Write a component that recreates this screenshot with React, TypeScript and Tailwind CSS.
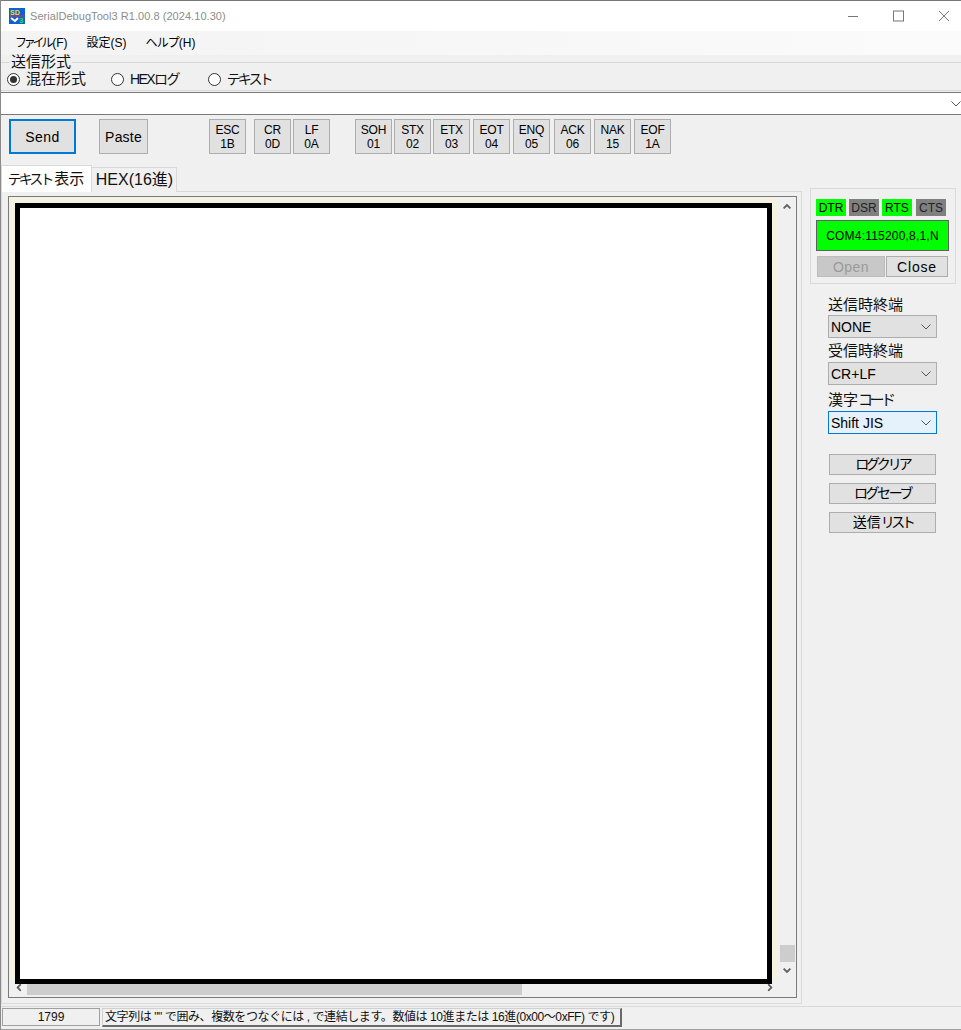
import React from 'react'

const font = { fontFamily: '"Liberation Sans", "Noto Sans CJK JP", sans-serif' }

const keys = [
  { top: 'ESC', bottom: '1B', ml: 'ml-0' },
  { top: 'CR', bottom: '0D', ml: 'ml-[8px]' },
  { top: 'LF', bottom: '0A', ml: 'ml-[2px]' },
  { top: 'SOH', bottom: '01', ml: 'ml-[25px]' },
  { top: 'STX', bottom: '02', ml: 'ml-[2px]' },
  { top: 'ETX', bottom: '03', ml: 'ml-[2px]' },
  { top: 'EOT', bottom: '04', ml: 'ml-[3px]' },
  { top: 'ENQ', bottom: '05', ml: 'ml-[3px]' },
  { top: 'ACK', bottom: '06', ml: 'ml-[4px]' },
  { top: 'NAK', bottom: '15', ml: 'ml-[3px]' },
  { top: 'EOF', bottom: '1A', ml: 'ml-[3px]' },
]

const Chevron = ({ className = '' }: { className?: string }) => (
  <svg width="10" height="6" viewBox="0 0 10 6" className={className} fill="none" stroke="currentColor" strokeWidth="1">
    <path d="M0.5 0.5 L5 5 L9.5 0.5" />
  </svg>
)

// scrollbar arrows are heavier than the combo ones
const ScrollArrow = ({ className = '' }: { className?: string }) => (
  <svg width="8" height="5" viewBox="0 0 8 5" className={`shrink-0 ${className}`} fill="none" stroke="currentColor" strokeWidth="1.8">
    <path d="M0.6 0.6 L4 4 L7.4 0.6" />
  </svg>
)

const Radio = ({ checked, children, className }: { checked?: boolean; children: React.ReactNode; className: string }) => (
  <div className={`flex items-center ${className}`}>
    <span className="w-[13px] h-[13px] rounded-full border border-[#333] bg-white flex items-center justify-center">
      {checked && <span className="w-[7px] h-[7px] rounded-full bg-[#333]" />}
    </span>
    <span className="ml-[6px] leading-[16px] text-[#111]">{children}</span>
  </div>
)

const Select = ({ value, focused, className }: { value: string; focused?: boolean; className: string }) => (
  <div
    className={`w-[109px] h-[23px] flex items-center justify-between pl-[2px] pr-[5px] border text-[14px] text-black ${
      focused ? 'bg-[#e5f1fb] border-[#0078d7]' : 'bg-[#e1e1e1] border-[#adadad]'
    } ${className}`}
  >
    <span className="pt-[1px]">{value}</span>
    <Chevron className="text-[#555]" />
  </div>
)

const SideButton = ({ children, className }: { children: React.ReactNode; className: string }) => (
  <div className={`w-[107px] h-[21px] ml-[1px] bg-[#e1e1e1] border border-[#adadad] flex items-center justify-center text-[14px] text-black ${className}`}>
    {children}
  </div>
)

const Led = ({ label, on, className }: { label: string; on?: boolean; className: string }) => (
  <div className={`w-[30px] h-[17px] flex items-center justify-center text-[12px] ${on ? 'bg-[#00ff00] text-black' : 'bg-[#808080] text-[#222]'} ${className}`}>
    {label}
  </div>
)

export default function App() {
  return (
    <div style={font} className="w-[961px] h-[1030px] bg-[#f0f0f0] flex flex-col overflow-hidden border-l border-[#8a8a8a]">
      {/* Title bar */}
      <div className="h-[31px] shrink-0 bg-white border-t border-[#777] flex items-center">
        <svg width="16" height="16" viewBox="0 0 16 16" className="ml-[8px]">
          <rect width="16" height="16" fill="#1060d0" />
          <text x="1" y="7" fontSize="7" fontWeight="700" fill="#f0e020">SD</text>
          <path d="M1 8 H15" stroke="#e03030" strokeWidth="1" />
          <path d="M2 10 L6 13 L9 10" stroke="#fff" strokeWidth="2" fill="none" />
          <text x="10" y="15" fontSize="8" fontWeight="700" fill="#30e030">3</text>
        </svg>
        <span className="ml-[5px] text-[11px] text-[#8c8c8c] tracking-[0.05px]">SerialDebugTool3 R1.00.8 (2024.10.30)</span>
        <div className="ml-auto flex items-center text-[#777]">
          <svg width="10" height="12" viewBox="0 0 10 12" className="mr-[35px]"><path d="M0 6.5 H10" stroke="currentColor" /></svg>
          <svg width="11" height="12" viewBox="0 0 11 12" className="mr-[34px]"><rect x="0.5" y="1" width="10" height="10" fill="none" stroke="currentColor" /></svg>
          <svg width="12" height="12" viewBox="0 0 12 12" className="mr-[11px]"><path d="M1 1 L11 11 M11 1 L1 11" stroke="currentColor" /></svg>
        </div>
      </div>

      {/* Menu */}
      <div className="h-[24px] shrink-0 bg-gradient-to-r from-[#f3f3f3] to-[#fbfbfb] flex items-center text-[12px] text-black">
        <span className="ml-[14px]"><span className="tracking-[-3.2px]">ファイル</span><span className="ml-[2px]">(F)</span></span>
        <span className="ml-[19px]">設定(S)</span>
        <span className="ml-[19px]"><span className="tracking-[-0.9px]">ヘルプ</span>(H)</span>
      </div>

      {/* 送信形式 group */}
      <div className="relative mt-[7px] h-[29px] shrink-0 border-t border-b border-[#d9d9d9] flex items-center pt-[5px]">
        <span className="absolute left-[9px] -top-[9px] px-[1px] bg-[#f0f0f0] text-[15px] leading-[16px] text-[#111]">送信形式</span>
        <Radio checked className="ml-[6px] text-[15px]">混在形式</Radio>
        <Radio className="ml-[25px] text-[14px]"><span className="tracking-[-1.6px]">HEXログ</span></Radio>
        <Radio className="ml-[29px] text-[14px]"><span className="tracking-[-3px]">テキスト</span></Radio>
      </div>

      {/* Send text box */}
      <div className="mt-[1px] h-[23px] shrink-0 bg-white border-t border-b border-[#7a7a7a] flex items-center justify-end">
        <Chevron className="text-[#555]" />
      </div>

      {/* Buttons */}
      <div className="mt-[4px] h-[36px] shrink-0 flex items-start text-black">
        <div className="ml-[8px] w-[67px] h-[35px] pt-[1px] bg-[#e1e1e1] border-2 border-[#0078d7] flex items-center justify-center text-[14px] tracking-[0.5px]">Send</div>
        <div className="ml-[23px] w-[49px] h-[35px] pt-[1px] bg-[#e1e1e1] border border-[#adadad] flex items-center justify-center text-[14px] tracking-[0.2px]">Paste</div>
        <div className="ml-[61px] flex">
          {keys.map(k => (
            <div key={k.top} className={`w-[37px] ${k.ml} h-[35px] pt-[1px] bg-[#e1e1e1] border border-[#adadad] flex flex-col items-center justify-center text-[12px] leading-[14px] tracking-[-0.2px]`}>
              <span>{k.top}</span>
              <span>{k.bottom}</span>
            </div>
          ))}
        </div>
      </div>

      {/* Main area */}
      <div className="flex flex-1 min-h-0">
        <div className="w-[805px] shrink-0 flex flex-col">
          <div className="mt-[10px] -mb-[1px] h-[27px] flex items-end shrink-0 relative z-10">
            <div className="w-[91px] h-[27px] bg-white border-t border-l border-r border-[#d9d9d9] flex items-center justify-center text-[#111] pr-[1px]">
              <span className="text-[14px] tracking-[-3px]">テキスト</span>
              <span className="text-[15px] ml-[3px]">表示</span>
            </div>
            <div className="w-[85px] h-[25px] bg-[#f0f0f0] border-t border-r border-[#d9d9d9] flex items-center justify-center text-[16px] text-[#111] pl-[1px]">HEX(16進)</div>
          </div>
          {/* Tab body */}
          <div className="w-[801px] h-[813px] border border-[#d9d9d9] bg-[#f0f0f0] pt-[4px] pl-[6px]">
            <div className="w-[789px] h-[802px] border border-[#7a7a7a] bg-[#f0f0f0] flex flex-col">
              <div className="flex h-[782px] shrink-0">
                <div className="w-[769px] h-[782px] pl-[1px] pt-[1px]">
                  <div className="w-[768px] h-[781px] bg-[#f5f3e0] pl-[5px] pt-[5px] relative z-10">
                    <div className="w-[757px] h-[781px] border-[5px] border-black bg-white" />
                  </div>
                </div>
                <div className="w-[18px] flex flex-col items-center text-[#606060] pt-[7px]">
                  <ScrollArrow className="rotate-180" />
                  <div className="mt-[736px] w-[15px] h-[17px] bg-[#cdcdcd]" />
                  <ScrollArrow className="mt-[6px]" />
                </div>
              </div>
              <div className="h-[18px] flex items-start text-[#606060]">
                <ScrollArrow className="rotate-90 ml-[6px] mt-[6px]" />
                <div className="ml-[4px] mt-[5px] w-[495px] h-[11px] bg-[#cdcdcd]" />
                <ScrollArrow className="-rotate-90 ml-[244px] mt-[6px] relative z-20" />
              </div>
            </div>
          </div>
        </div>

        {/* Right panel */}
        <div className="flex-1 flex flex-col">
          <div className="ml-[4px] mt-[33px] w-[146px] h-[96px] border border-[#d9d9d9] p-[5px] pt-[10px]">
            <div className="flex">
              <Led on label="DTR" className="" />
              <Led label="DSR" className="ml-[3px]" />
              <Led on label="RTS" className="ml-[3px]" />
              <Led label="CTS" className="ml-[4px]" />
            </div>
            <div className="mt-[4px] w-[133px] h-[31px] bg-[#00ff00] border border-[#606060] flex items-center justify-center text-[12px] text-black tracking-[0.2px]">COM4:115200,8,1,N</div>
            <div className="mt-[5px] ml-[1px] flex">
              <div className="w-[68px] h-[21px] pt-[1px] bg-[#c8c8c8] border border-[#bcbcbc] flex items-center justify-center text-[14px] text-[#9a9a9a] tracking-[0.5px]">Open</div>
              <div className="ml-[1px] w-[62px] h-[21px] pt-[1px] bg-[#e1e1e1] border border-[#adadad] flex items-center justify-center text-[14px] text-black tracking-[0.8px]">Close</div>
            </div>
          </div>
          <div className="ml-[22px] mt-[12px] flex flex-col">
            <span className="text-[15px] leading-[18px] text-[#111]">送信時終端</span>
            <Select value="NONE" className="mt-[1px]" />
            <span className="mt-[4px] text-[15px] leading-[18px] text-[#111]">受信時終端</span>
            <Select value="CR+LF" className="mt-[2px]" />
            <span className="mt-[6px] text-[15px] leading-[18px] text-[#111]">漢字<span className="tracking-[-3.5px]">コード</span></span>
            <Select focused value="Shift JIS" className="mt-[2px]" />
            <SideButton className="mt-[20px]"><span className="tracking-[-3px]">ログクリア</span></SideButton>
            <SideButton className="mt-[8px]"><span className="tracking-[-2.4px]">ログセーブ</span></SideButton>
            <SideButton className="mt-[8px]">送信<span className="tracking-[-3.5px]">リスト</span></SideButton>
          </div>
        </div>
      </div>

      {/* Status bar */}
      <div className="h-[24px] shrink-0 border-t border-b border-t-[#d9d9d9] border-b-[#a0a0a0] flex items-start pt-[1px]">
        <div className="ml-[1px] w-[98px] h-[18px] border border-[#a0a0a0] flex items-center justify-center text-[12px] text-[#111]">1799</div>
        <div className="ml-[2px] w-[520px] h-[19px] border-t border-l border-[#d0d0d0] border-r-2 border-b-2 border-r-[#696969] border-b-[#696969] flex items-center pl-[2px] text-[12px] tracking-[-0.42px] text-[#111] whitespace-nowrap overflow-hidden">
          文字列は "" で囲み、複数をつなぐには , で連結します。数値は 10進または 16進(0x00～0xFF) です)
        </div>
      </div>
    </div>
  )
}
